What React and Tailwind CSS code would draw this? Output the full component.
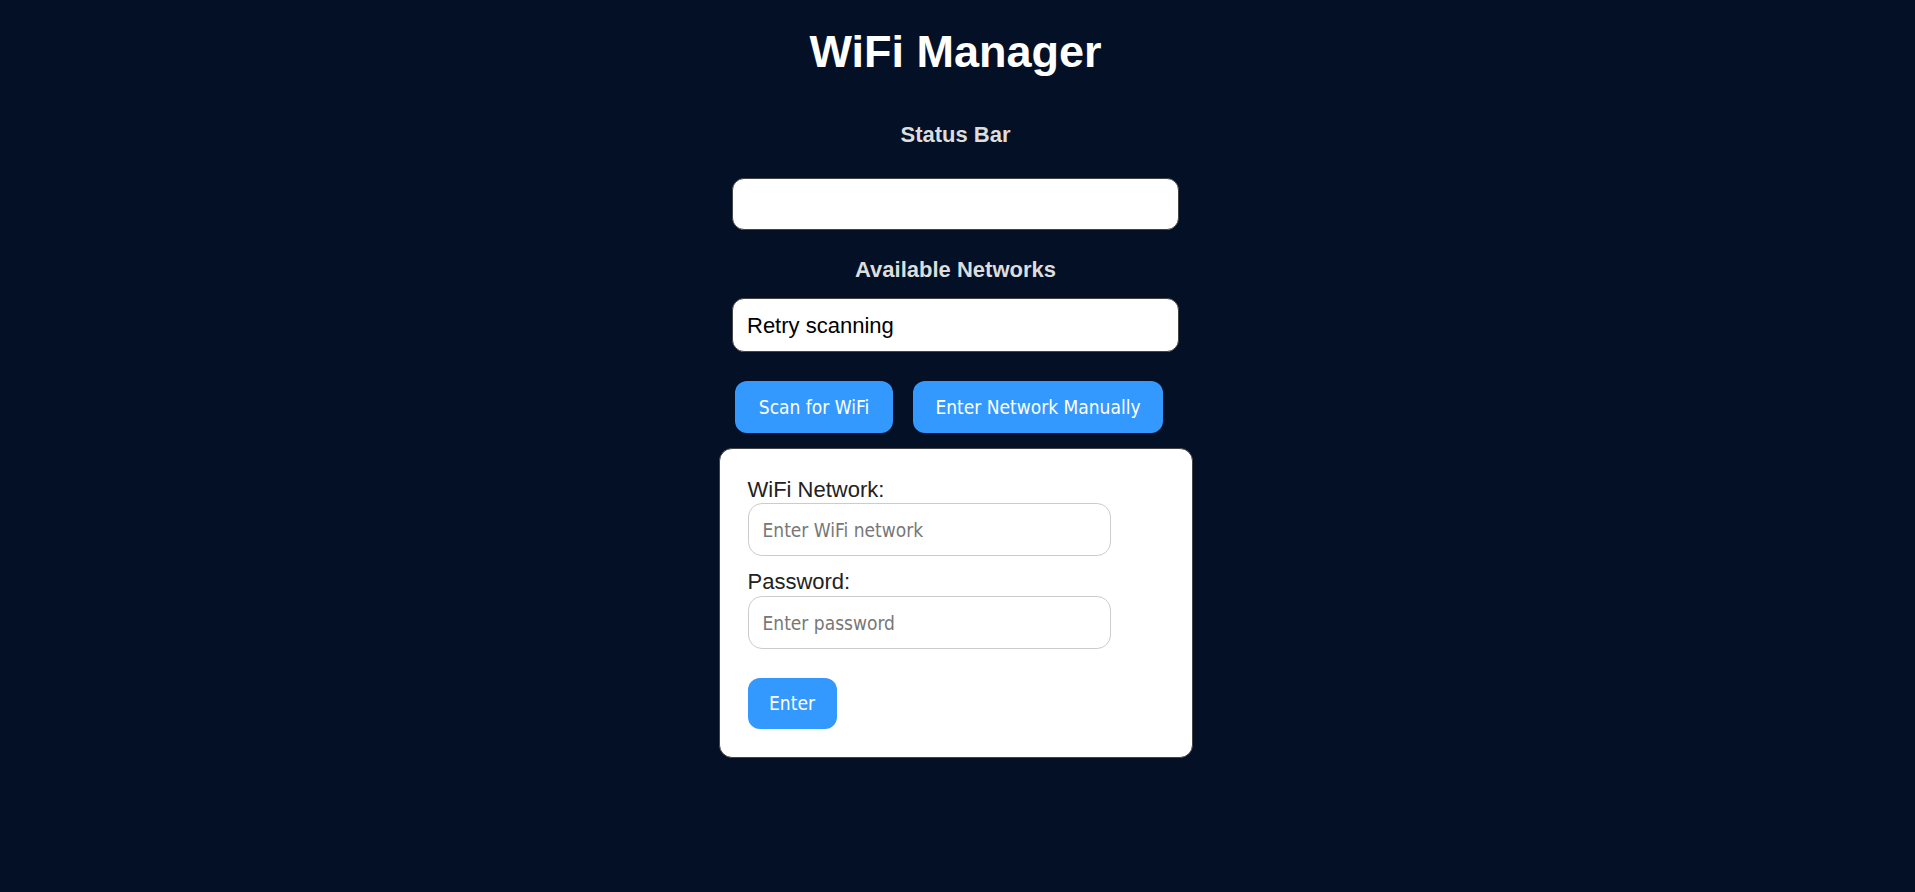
import React from "react";

const sans = { fontFamily: '"Liberation Sans", Arial, sans-serif' };
const tah = { fontFamily: '"DejaVu Sans Condensed", "DejaVu Sans", sans-serif', fontStretch: "condensed" };

export default function App() {
  return (
    <div className="min-h-screen w-full bg-[#031026] flex flex-col items-center pr-[4px]" style={sans}>
      <h1 className="mt-[27px] text-[45px] leading-[50px] font-bold text-white">WiFi Manager</h1>
      <h3 className="mt-[45px] text-[22px] leading-[26px] font-bold text-[#dddddd]">Status Bar</h3>
      <div className="mt-[30px] w-[447px] h-[52px] bg-white border border-[#444] rounded-[12px]"></div>
      <h3 className="mt-[27px] text-[22px] leading-[26px] font-bold text-[#dddddd]">Available Networks</h3>
      <div className="mt-[15px] w-[447px] h-[54px] bg-white border border-[#444] rounded-[12px] flex items-center px-[14px] text-[22px] text-black">
        Retry scanning
      </div>
      <div className="mt-[29px] w-[447px] pl-[3px] flex gap-[20px]">
        <button
          className="w-[158px] h-[52px] rounded-[12px] bg-[#3399ff] text-white text-[19px] flex items-center justify-center"
          style={tah}
        >
          Scan for WiFi
        </button>
        <button
          className="w-[250px] h-[52px] rounded-[12px] bg-[#3399ff] text-white text-[19px] flex items-center justify-center"
          style={tah}
        >
          Enter Network Manually
        </button>
      </div>
      <div className="mt-[15px] w-[474px] bg-white border border-[#444] rounded-[13px] p-[28px] flex flex-col items-start">
        <label className="text-[22px] leading-[26px] text-[#222]">WiFi Network:</label>
        <input
          className="w-[363px] h-[53px] border border-[#cccccc] rounded-[14px] px-[14px] text-[19px] text-[#222] placeholder:text-[#777] outline-none"
          style={tah}
          placeholder="Enter WiFi network"
        />
        <label className="mt-[13px] text-[22px] leading-[26px] text-[#222]">Password:</label>
        <input
          type="password"
          className="mt-[1px] w-[363px] h-[53px] border border-[#cccccc] rounded-[14px] px-[14px] text-[19px] text-[#222] placeholder:text-[#777] outline-none"
          style={tah}
          placeholder="Enter password"
        />
        <button
          className="mt-[29px] w-[89px] h-[51px] rounded-[12px] bg-[#3399ff] text-white text-[19px] flex items-center justify-center"
          style={tah}
        >
          Enter
        </button>
      </div>
    </div>
  );
}
